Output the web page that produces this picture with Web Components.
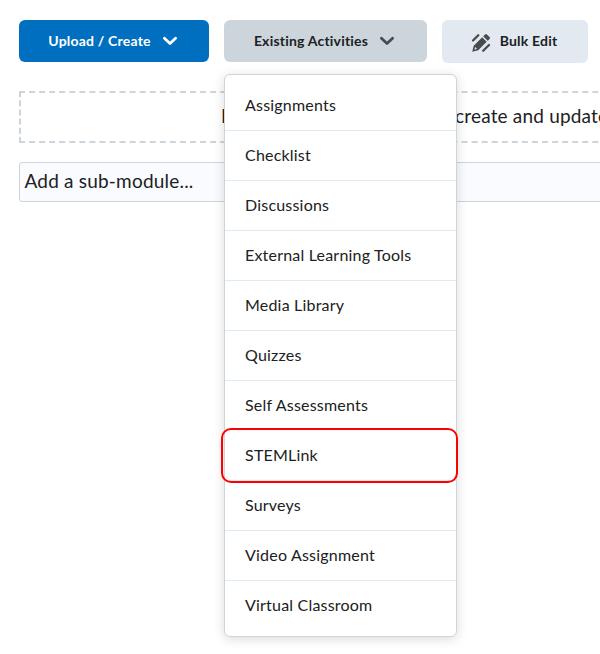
<!DOCTYPE html>
<html lang="en">
<head>
<meta charset="utf-8">
<title>Content module</title>
<style>
html, body { margin: 0; height: 100%; overflow: hidden; background: #fff; }
body { font-family: Lato, "Open Sans", sans-serif; color: #202122; }
</style>
</head>
<body>
<module-page></module-page>
<script>
class ActionButton extends HTMLElement {
  connectedCallback() {
    this.attachShadow({ mode: 'open' }).innerHTML = `
      <style>
        :host { display: flex; box-sizing: border-box; height: 42px; align-items: center; justify-content: center; padding-right: 2px;
          border-radius: 6px; background: #cdd5dc; color: #202122; font-size: 14px; font-weight: 700; line-height: 20px; white-space: nowrap; }
        :host([kind=primary]) { background: #006fbf; color: #fff; width: 190px; }
        :host([kind=open]) { width: 203px; }
        :host([kind=subtle]) { background: #e3e9f1; width: 146px; height: 43px; }
        .chev { width: 16px; height: 10px; margin-left: 11px; fill: none; stroke: #494c4e; stroke-width: 2.8; stroke-linecap: round; stroke-linejoin: round; }
        :host([kind=primary]) .chev { stroke: #fff; }
        .pen { width: 20px; height: 20px; margin: 2px 9px 0 0; fill: #494c4e; }
        span { letter-spacing: .2px; }
        :host([kind=subtle]) span { padding-bottom: 2px; }
      </style>
      ${this.getAttribute('kind') === 'subtle' ? `<svg class="pen" viewBox="0 0 20 20">
        <path d="M1.2 18.8 2.7 12.8 11.2 4.3 15.7 8.8 7.2 17.3ZM12.2 3.3 14.1 1.4Q15 .6 15.9 1.4L18.6 4.1Q19.4 5 18.6 5.9L16.7 7.8Z"/>
        <path d="M2 7.5 7.3 2.2M12.2 17.8 18 12" fill="none" stroke="#494c4e" stroke-width="2.3" stroke-linecap="round"/>
        <path d="m4.2 14 1.8 1.8-2.6 1Z" fill="#e3e9f1"/></svg>` : ''}
      <span><slot></slot></span>
      ${this.getAttribute('kind') === 'subtle' ? '' : '<svg class="chev" viewBox="0 0 16 10"><path d="M2.4 2.3 8 7.5l5.6-5.2"/></svg>'}`;
  }
}
class DropZone extends HTMLElement {
  connectedCallback() {
    this.attachShadow({ mode: 'open' }).innerHTML = `
      <style>
        :host { display: flex; box-sizing: border-box; width: 700px; height: 52px; align-items: center; border: 2px dashed #cdd5dc;
          font-size: 19px; letter-spacing: .18px; white-space: pre; padding: 0 0 3px 200px; }
        .lead { width: 234px; overflow: hidden; }
      </style><span class="lead">Drag and drop files here to </span><span><slot></slot></span>`;
  }
}
class SubModuleField extends HTMLElement {
  connectedCallback() {
    this.attachShadow({ mode: 'open' }).innerHTML = `
      <style>
        :host { display: flex; box-sizing: border-box; width: 700px; height: 40px; align-items: center; border: 1px solid #cdd5dc;
          border-radius: 3px; background: #f9fbff; font-size: 19px; letter-spacing: .2px; padding: 0 0 3px 4.5px; }
      </style><span><slot></slot></span>`;
  }
}
class MenuItem extends HTMLElement {
  connectedCallback() {
    this.attachShadow({ mode: 'open' }).innerHTML = `
      <style>
        :host { display: flex; box-sizing: border-box; height: 50px; align-items: center; padding: 0 0 3px 20px;
          border-top: 1px solid #e3e9f1; font-size: 16px; letter-spacing: .2px; white-space: nowrap; position: relative; }
        :host(:first-child) { border-color: transparent; }
        :host([marked]) { z-index: 1; border-color: transparent; }
        :host([marked])::after { content: ""; position: absolute; left: -4px; top: -3px; width: 233px; height: 51px;
          border: 2px solid #f00; border-radius: 10px; }
      </style><span><slot></slot></span>`;
  }
}
class DropMenu extends HTMLElement {
  connectedCallback() {
    this.attachShadow({ mode: 'open' }).innerHTML = `
      <style>
        :host { display: block; box-sizing: border-box; position: absolute; left: 224px; top: 74px; width: 233px; height: 563px;
          padding-top: 5px; background: #fff; border: 1px solid #cdd5dc; border-radius: 6px; box-shadow: 0 2px 12px rgba(0,0,0,.15); }
      </style><slot></slot>`;
  }
}
class ModulePage extends HTMLElement {
  connectedCallback() {
    const items = ['Assignments', 'Checklist', 'Discussions', 'External Learning Tools', 'Media Library', 'Quizzes',
      'Self Assessments', 'STEMLink', 'Surveys', 'Video Assignment', 'Virtual Classroom'];
    this.attachShadow({ mode: 'open' }).innerHTML = `
      <style>
        :host { display: block; box-sizing: border-box; position: relative; height: 654px; padding: 20px 0 0 19px; overflow: hidden; }
        nav { display: flex; gap: 15px; height: 71px; align-items: flex-start; }
        drop-zone { margin-bottom: 19px; }
      </style>
      <nav><action-button kind="primary">Upload / Create</action-button><action-button kind="open">Existing Activities</action-button><action-button kind="subtle">Bulk Edit</action-button></nav>
      <drop-zone>create and update topics</drop-zone>
      <sub-module-field>Add a sub-module...</sub-module-field>
      <drop-menu>${items.map(t => `<menu-item${t === 'STEMLink' ? ' marked' : ''}>${t}</menu-item>`).join('')}</drop-menu>`;
  }
}
customElements.define('action-button', ActionButton);
customElements.define('drop-zone', DropZone);
customElements.define('sub-module-field', SubModuleField);
customElements.define('menu-item', MenuItem);
customElements.define('drop-menu', DropMenu);
customElements.define('module-page', ModulePage);
</script>
</body>
</html>
